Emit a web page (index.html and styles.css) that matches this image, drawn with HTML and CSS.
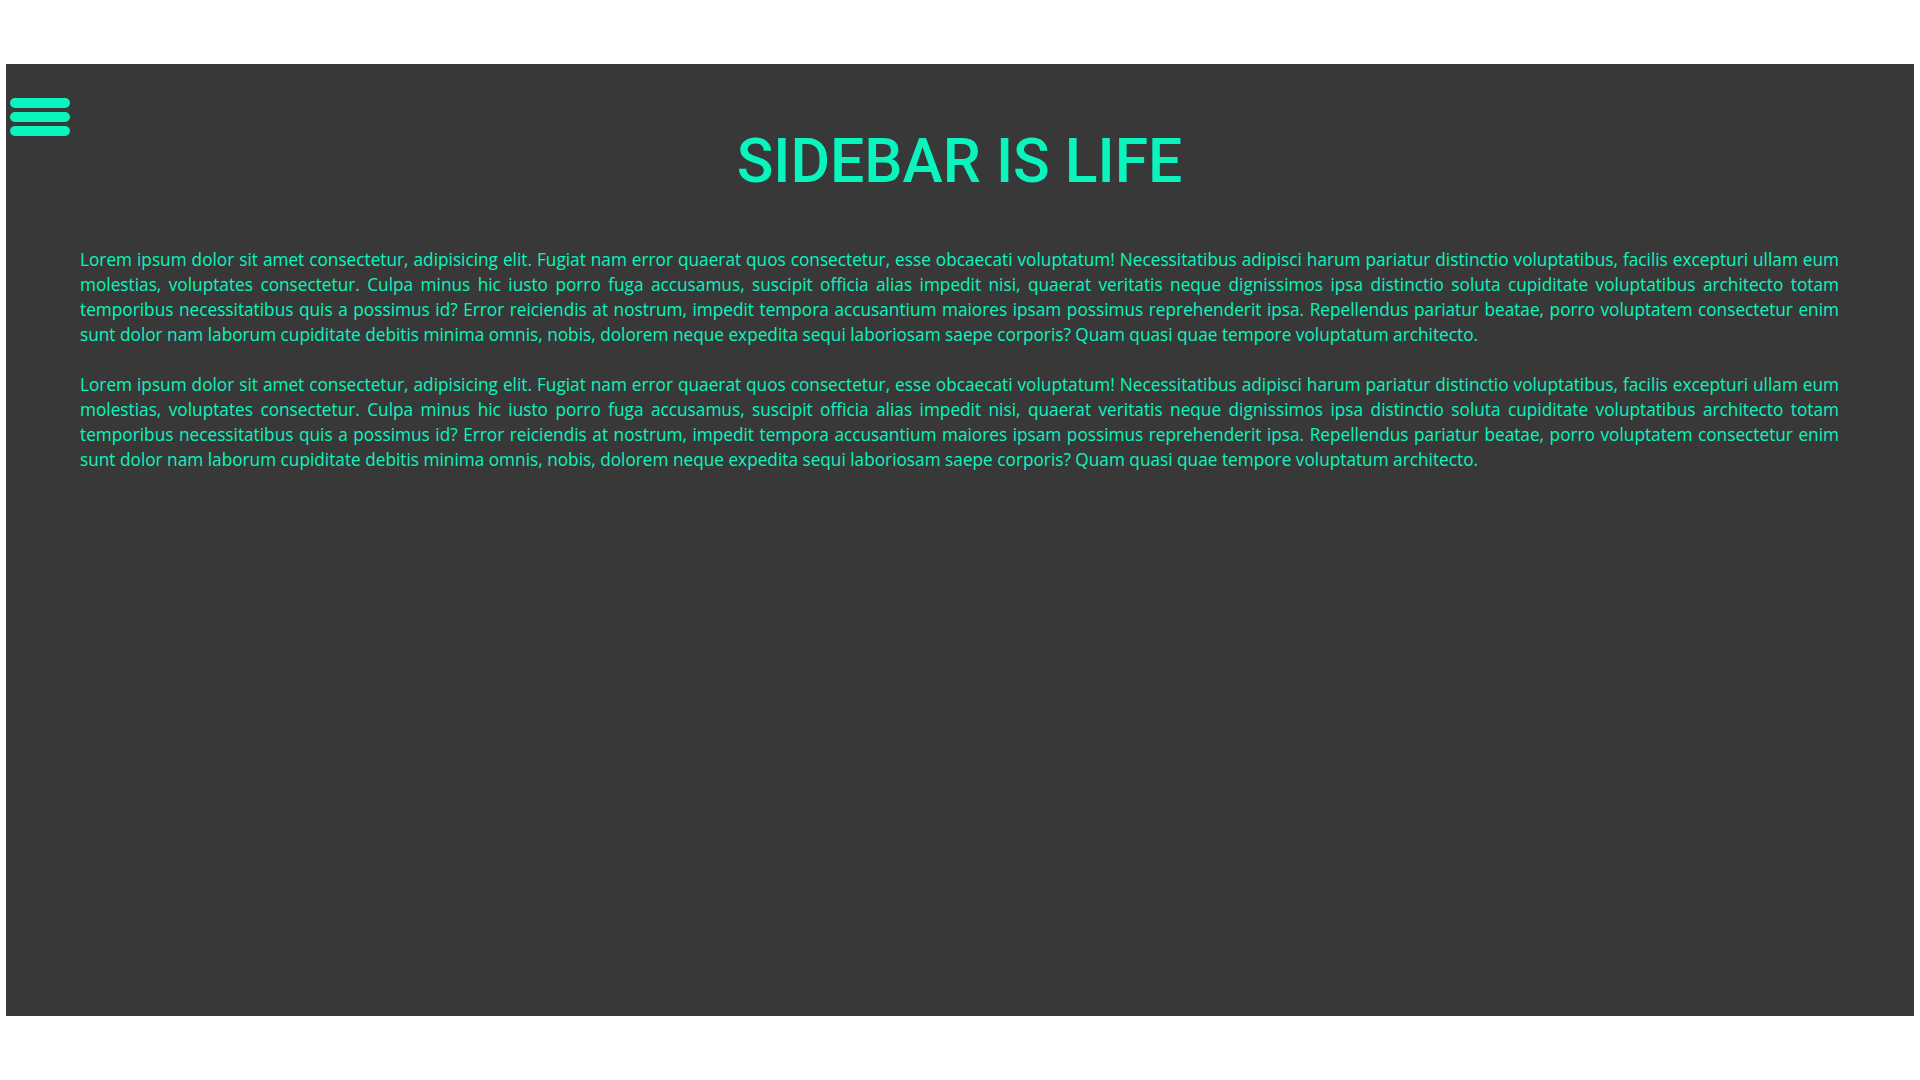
FILE: index.html
```html
<!DOCTYPE html>
<html lang="en">
<head>
<meta charset="utf-8">
<title>Sidebar is life</title>
<link rel="stylesheet" href="styles.css">
</head>
<body>
<main class="page">
  <button class="toggle" aria-label="Open sidebar">
    <span class="bar"></span>
    <span class="bar"></span>
    <span class="bar"></span>
  </button>
  <h1 class="title">SIDEBAR IS LIFE</h1>
  <p class="text">Lorem ipsum dolor sit amet consectetur, adipisicing elit. Fugiat nam error quaerat quos consectetur, esse obcaecati voluptatum! Necessitatibus adipisci harum pariatur distinctio voluptatibus, facilis excepturi ullam eum molestias, voluptates consectetur. Culpa minus hic iusto porro fuga accusamus, suscipit officia alias impedit nisi, quaerat veritatis neque dignissimos ipsa distinctio soluta cupiditate voluptatibus architecto totam temporibus necessitatibus quis a possimus id? Error reiciendis at nostrum, impedit tempora accusantium maiores ipsam possimus reprehenderit ipsa. Repellendus pariatur beatae, porro voluptatem consectetur enim sunt dolor nam laborum cupiditate debitis minima omnis, nobis, dolorem neque expedita sequi laboriosam saepe corporis? Quam quasi quae tempore voluptatum architecto.</p>
  <p class="text">Lorem ipsum dolor sit amet consectetur, adipisicing elit. Fugiat nam error quaerat quos consectetur, esse obcaecati voluptatum! Necessitatibus adipisci harum pariatur distinctio voluptatibus, facilis excepturi ullam eum molestias, voluptates consectetur. Culpa minus hic iusto porro fuga accusamus, suscipit officia alias impedit nisi, quaerat veritatis neque dignissimos ipsa distinctio soluta cupiditate voluptatibus architecto totam temporibus necessitatibus quis a possimus id? Error reiciendis at nostrum, impedit tempora accusantium maiores ipsam possimus reprehenderit ipsa. Repellendus pariatur beatae, porro voluptatem consectetur enim sunt dolor nam laborum cupiditate debitis minima omnis, nobis, dolorem neque expedita sequi laboriosam saepe corporis? Quam quasi quae tempore voluptatum architecto.</p>
</main>
</body>
</html>
```
FILE: styles.css
```css
* { box-sizing: border-box; }
html, body { margin: 0; padding: 0; background: #ffffff; }
body { padding: 64px 6px 64px; }
.page {
  position: relative;
  height: 952px;
  background: #383838;
  padding: 62px 75px 0 74px;
  color: #0af5be;
}
.toggle {
  position: absolute;
  top: 34px;
  left: 4px;
  display: flex;
  flex-direction: column;
  gap: 4px;
  padding: 0;
  border: 0;
  background: none;
  cursor: pointer;
}
.bar {
  display: block;
  width: 60px;
  height: 10px;
  border-radius: 5px;
  background: #0af5be;
}
.title {
  margin: 0;
  text-align: center;
  font-family: Roboto, "Liberation Sans", sans-serif;
  font-weight: 500;
  font-size: 60.6px;
  line-height: 72px;
  color: #0af5be;
}
.text {
  margin: 49px 0 0;
  font-family: "Open Sans", "Noto Sans", sans-serif;
  font-weight: 500;
  font-size: 17.24px;
  line-height: 25px;
  text-align: justify;
  color: #0af5be;
}
.text + .text { margin-top: 25px; }
```
